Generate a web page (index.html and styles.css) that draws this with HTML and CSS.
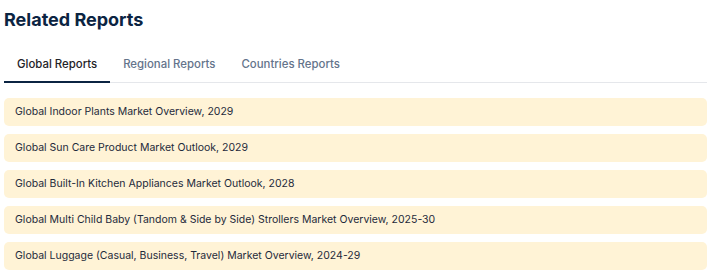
FILE: index.html
```html
<html>
	<head>
		<title>Related Reports</title>
		<link rel="stylesheet" href="styles.css">
	</head>
	<body>
		<div id="related">
			<h2 class="title">Related Reports</h2>
			<div class="tabs">
				<div class="tab active">Global Reports</div>
				<div class="tab">Regional Reports</div>
				<div class="tab">Countries Reports</div>
			</div>
			<div class="list">
				<a class="item" href="#">Global Indoor Plants Market Overview, 2029</a>
				<a class="item" href="#">Global Sun Care Product Market Outlook, 2029</a>
				<a class="item" href="#">Global Built-In Kitchen Appliances Market Outlook, 2028</a>
				<a class="item" href="#">Global Multi Child Baby (Tandom &amp; Side by Side) Strollers Market Overview, 2025-30</a>
				<a class="item" href="#">Global Luggage (Casual, Business, Travel) Market Overview, 2024-29</a>
			</div>
		</div>
	</body>
</html>
```

FILE: styles.css
```css
html, body {margin:0;padding:0;}
body {
	font-family:Inter, "Noto Sans", sans-serif;
	background:#fff;
	color:#1f2937;
}
#related {
	padding:9px 5px 0 4px;
}
.title {
	margin:0;
	font-size:18px;
	line-height:22px;
	font-weight:700;
	color:#0b2442;
}
.tabs {
	display:flex;
	margin-top:18px;
	border-bottom:1px solid #e5e7eb;
}
.tab {
	font-size:11.4px;
	line-height:16px;
	font-weight:500;
	color:#64748b;
	padding:7px 13px 9px 13px;
	margin-bottom:-1px;
	border-bottom:2px solid transparent;
}
.tab.active {
	color:#1f2328;
	border-bottom-color:#0b2442;
}
.list {
	display:flex;
	flex-direction:column;
	gap:8px;
	margin-top:15px;
}
.item {
	display:block;
	height:28px;
	line-height:28px;
	padding:0 11px;
	background:#fff3d6;
	border-radius:5px;
	font-size:10.5px;
	color:#1e2a3b;
	text-decoration:none;
}
```
